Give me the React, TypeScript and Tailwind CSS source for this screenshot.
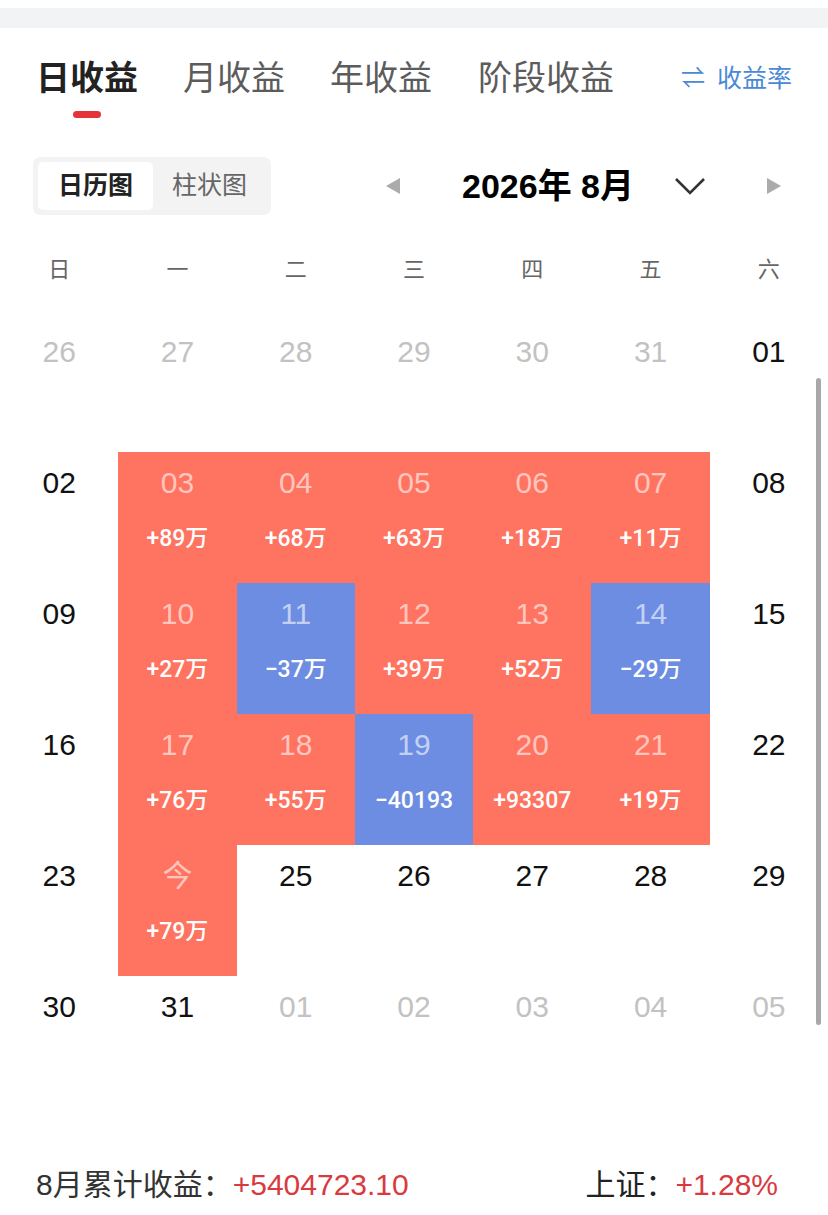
import React from "react";

type Cell = {
  day: string;
  muted?: boolean;
  value?: string;
  tone?: "up" | "down";
};

const weekdays = ["日", "一", "二", "三", "四", "五", "六"];

const rows: Cell[][] = [
  [
    { day: "26", muted: true },
    { day: "27", muted: true },
    { day: "28", muted: true },
    { day: "29", muted: true },
    { day: "30", muted: true },
    { day: "31", muted: true },
    { day: "01" },
  ],
  [
    { day: "02" },
    { day: "03", value: "+89万", tone: "up" },
    { day: "04", value: "+68万", tone: "up" },
    { day: "05", value: "+63万", tone: "up" },
    { day: "06", value: "+18万", tone: "up" },
    { day: "07", value: "+11万", tone: "up" },
    { day: "08" },
  ],
  [
    { day: "09" },
    { day: "10", value: "+27万", tone: "up" },
    { day: "11", value: "−37万", tone: "down" },
    { day: "12", value: "+39万", tone: "up" },
    { day: "13", value: "+52万", tone: "up" },
    { day: "14", value: "−29万", tone: "down" },
    { day: "15" },
  ],
  [
    { day: "16" },
    { day: "17", value: "+76万", tone: "up" },
    { day: "18", value: "+55万", tone: "up" },
    { day: "19", value: "−40193", tone: "down" },
    { day: "20", value: "+93307", tone: "up" },
    { day: "21", value: "+19万", tone: "up" },
    { day: "22" },
  ],
  [
    { day: "23" },
    { day: "今", value: "+79万", tone: "up" },
    { day: "25" },
    { day: "26" },
    { day: "27" },
    { day: "28" },
    { day: "29" },
  ],
  [
    { day: "30" },
    { day: "31" },
    { day: "01", muted: true },
    { day: "02", muted: true },
    { day: "03", muted: true },
    { day: "04", muted: true },
    { day: "05", muted: true },
  ],
];

function DayCell({ cell }: { cell: Cell }) {
  const bg =
    cell.tone === "up"
      ? "bg-[#ff7361]"
      : cell.tone === "down"
      ? "bg-[#6d8de3]"
      : "bg-white";
  const dayColor = cell.tone
    ? "text-white/60"
    : cell.muted
    ? "text-[#c2c2c2]"
    : "text-[#111]";

  return (
    <div className={`flex h-[131px] flex-col items-center ${bg}`}>
      <span className={`mt-[14px] text-[30px] leading-[34px] ${dayColor}`}>
        {cell.day}
      </span>
      {cell.value && (
        <span
          className="mt-[26px] text-[23px] font-medium leading-[26px] text-white"
          style={{ fontFamily: 'Roboto, "Noto Sans CJK SC", sans-serif' }}
        >
          {cell.value}
        </span>
      )}
    </div>
  );
}

export default function App() {
  const font = {
    fontFamily:
      '"Liberation Sans", "Noto Sans CJK SC", sans-serif',
  };

  return (
    <div className="relative h-[1215px] w-[828px] overflow-hidden bg-white" style={font}>
      <div className="h-2 bg-white" />
      <div className="h-5 bg-[#f2f3f5]" />

      {/* tabs */}
      <div className="flex items-start px-[36px] pt-[28px]">
        <div className="flex flex-col items-center">
          <span className="text-[34px] font-bold leading-[44px] text-[#222]">日收益</span>
          <span className="mt-[11px] h-[7px] w-[28px] rounded-full bg-[#e5333a]" />
        </div>
        <span className="ml-[45px] text-[34px] leading-[44px] text-[#5c5c5c]">月收益</span>
        <span className="ml-[45px] text-[34px] leading-[44px] text-[#5c5c5c]">年收益</span>
        <span className="ml-[46px] text-[34px] leading-[44px] text-[#5c5c5c]">阶段收益</span>
        <div className="ml-auto mt-[2px] flex items-center gap-[12px] text-[#4a89d6]">
          <span className="text-[24px] leading-[40px]">⇌</span>
          <span className="text-[25px] leading-[40px]">收益率</span>
        </div>
      </div>

      {/* switch + month */}
      <div className="mt-[39px] flex items-center pl-[33px] pr-[46px]">
        <div className="flex h-[58px] w-[238px] items-center rounded-[7px] bg-[#f3f3f3] p-[5px]">
          <div className="flex h-full w-[115px] items-center justify-center rounded-[5px] bg-white text-[25px] font-bold text-[#222]">
            日历图
          </div>
          <div className="flex h-full flex-1 items-center justify-center text-[25px] text-[#666]">
            柱状图
          </div>
        </div>
        <svg className="ml-[114px]" width="16" height="18" viewBox="0 0 16 18">
          <path d="M15 1 L1 9 L15 17 Z" fill="#ababab" />
        </svg>
        <span className="ml-[61px] text-[34px] font-bold leading-[40px] text-black">
          2026年 8月
        </span>
        <svg className="ml-[40px]" width="32" height="20" viewBox="0 0 32 20">
          <path d="M2 3 L16 17 L30 3" fill="none" stroke="#333" strokeWidth="2.6" />
        </svg>
        <svg className="ml-auto" width="16" height="18" viewBox="0 0 16 18">
          <path d="M1 1 L15 9 L1 17 Z" fill="#ababab" />
        </svg>
      </div>

      {/* weekdays */}
      <div className="mt-[40px] grid grid-cols-7">
        {weekdays.map((w) => (
          <div key={w} className="text-center text-[22px] leading-[30px] text-[#666]">
            {w}
          </div>
        ))}
      </div>

      {/* calendar */}
      <div className="mt-[36px] grid grid-cols-7">
        {rows.flat().map((c, i) => (
          <DayCell key={i} cell={c} />
        ))}
      </div>

      {/* footer */}
      <div className="mt-[60px] flex items-center px-[36px] text-[30px] leading-[36px]">
        <span className="text-[#333]">8月累计收益：</span>
        <span className="text-[#d83a40]">+5404723.10</span>
        <span className="ml-auto text-[#222]">上证：</span>
        <span className="mr-[14px] text-[#d83a40]">+1.28%</span>
      </div>

      <div className="absolute left-[816px] top-[378px] h-[647px] w-[5px] rounded-full bg-[#a8a8a8]" />
    </div>
  );
}
